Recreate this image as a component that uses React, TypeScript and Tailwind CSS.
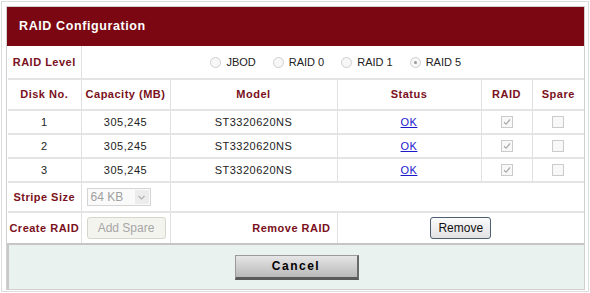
import React from "react";

const label = "font-bold text-[#7a1020]";

function Radio({ text, checked }: { text: string; checked?: boolean }) {
  return (
    <span className="flex items-center gap-[5px]">
      <span className="flex h-[11px] w-[11px] items-center justify-center rounded-full border border-[#cfcfcf] bg-[#f7f7f7]">
        {checked && <span className="h-[3px] w-[3px] rounded-full bg-[#9a9a9a]" />}
      </span>
      <span className="text-[11px] text-[#222]">{text}</span>
    </span>
  );
}

function Check({ checked }: { checked?: boolean }) {
  return (
    <span className="mx-auto flex h-[12px] w-[12px] items-center justify-center border border-[#cbcbcb] bg-[#f8f8f8]">
      {checked && (
        <svg width="8" height="8" viewBox="0 0 8 8">
          <path d="M1 4.2 L3.1 6.2 L7 1.5" fill="none" stroke="#a8a8a8" strokeWidth="1.2" />
        </svg>
      )}
    </span>
  );
}

const disks = [1, 2, 3];

export default function App() {
  return (
    <div
      className="h-[293px] w-[590px] bg-white p-px"
      style={{ fontFamily: '"Liberation Sans", Arial, sans-serif' }}
    >
      <div className="h-full border border-[#dcdcdc] pb-px pl-[4px] pr-[3px] pt-[4px]">
        <div className="border border-[#d0d0d0]">
          <div className="flex h-[39px] items-center bg-[#7b0712] pl-[12px] text-[12.5px] font-bold tracking-[0.6px] text-white">
            RAID Configuration
          </div>
          <table className="w-full table-fixed border-collapse text-[11px] tracking-[0.5px] text-[#222]">
            <colgroup>
              <col className="w-[73px]" />
              <col className="w-[89px]" />
              <col className="w-[167px]" />
              <col className="w-[144px]" />
              <col className="w-[51px]" />
              <col />
            </colgroup>
            <tbody>
              <tr className="h-[33px] border-b-2 border-[#e4e4e4]">
                <td className={`${label} border-r border-[#e0e0e0] text-center`}>RAID Level</td>
                <td colSpan={5}>
                  <div className="flex items-center justify-center gap-[17px] pl-[6px] tracking-normal">
                    <Radio text="JBOD" />
                    <Radio text="RAID 0" />
                    <Radio text="RAID 1" />
                    <Radio text="RAID 5" checked />
                  </div>
                </td>
              </tr>
              <tr className="h-[31px] border-b-2 border-[#e4e4e4] text-center">
                <td className={`${label} border-r border-[#e0e0e0]`}>Disk No.</td>
                <td className={`${label} border-r border-[#e0e0e0]`}>Capacity (MB)</td>
                <td className={`${label} border-r border-[#e0e0e0]`}>Model</td>
                <td className={`${label} border-r border-[#e0e0e0]`}>Status</td>
                <td className={`${label} border-r border-[#e0e0e0]`}>RAID</td>
                <td className={label}>Spare</td>
              </tr>
              {disks.map((n) => (
                <tr key={n} className="h-[24px] border-b-2 border-[#e4e4e4] text-center">
                  <td className="border-r border-[#e0e0e0]">{n}</td>
                  <td className="border-r border-[#e0e0e0]">305,245</td>
                  <td className="border-r border-[#e0e0e0]">ST3320620NS</td>
                  <td className="border-r border-[#e0e0e0]">
                    <a href="#" className="text-[#1a1acc] underline">OK</a>
                  </td>
                  <td className="border-r border-[#e0e0e0]">
                    <Check checked />
                  </td>
                  <td>
                    <Check />
                  </td>
                </tr>
              ))}
              <tr className="h-[30px] border-b-2 border-[#e4e4e4]">
                <td className={`${label} border-r border-[#e0e0e0] text-center`}>Stripe Size</td>
                <td className="pl-[5px]">
                  <div className="flex h-[18px] w-[64px] items-center justify-between border border-[#d4d4d4] bg-[#fafafa] pl-[3px] pr-px text-[12px] tracking-normal text-[#a0a0a0]">
                    <span>64 KB</span>
                    <span className="flex h-[14px] w-[14px] items-center justify-center bg-[#ececec]">
                      <svg width="7" height="5" viewBox="0 0 7 5">
                        <path d="M0.5 1 L3.5 4 L6.5 1" fill="none" stroke="#b0b0b0" strokeWidth="1.2" />
                      </svg>
                    </span>
                  </div>
                </td>
                <td colSpan={4} className="border-l border-[#e0e0e0]" />
              </tr>
              <tr className="h-[32px]">
                <td className={`${label} border-r border-[#e0e0e0] text-center`}>Create RAID</td>
                <td className="border-r border-[#e0e0e0] pl-[5px]">
                  <button
                    disabled
                    className="h-[22px] w-[79px] rounded-[3px] border border-[#d6d6cc] bg-[#f4f4ee] text-[12px] tracking-normal text-[#a6a6a6]"
                  >
                    Add Spare
                  </button>
                </td>
                <td className={`${label} border-r border-[#e0e0e0] pr-[6px] text-right`}>Remove RAID</td>
                <td colSpan={3} className="text-center">
                  <button className="h-[22px] w-[61px] rounded-[3px] border border-[#4d5f70] bg-gradient-to-b from-[#fbfbfb] to-[#e2e2e2] text-[12px] tracking-normal text-[#111]">
                    Remove
                  </button>
                </td>
              </tr>
              <tr className="h-[45px] border-t-2 border-[#c6c6c6] bg-[#eaf2f0]">
                <td colSpan={6} className="border-l-2 border-[#c8c8c8] text-center">
                  <button className="h-[25px] w-[124px] border border-b-[3px] border-r-2 border-[#9a9a9a] border-b-[#5a5a5a] border-r-[#6a6a6a] bg-gradient-to-b from-[#e6e6e6] via-[#cfcfcf] to-[#b9b9b9] text-[12px] font-bold tracking-[1.5px] text-black">
                    Cancel
                  </button>
                </td>
              </tr>
            </tbody>
          </table>
        </div>
      </div>
    </div>
  );
}
